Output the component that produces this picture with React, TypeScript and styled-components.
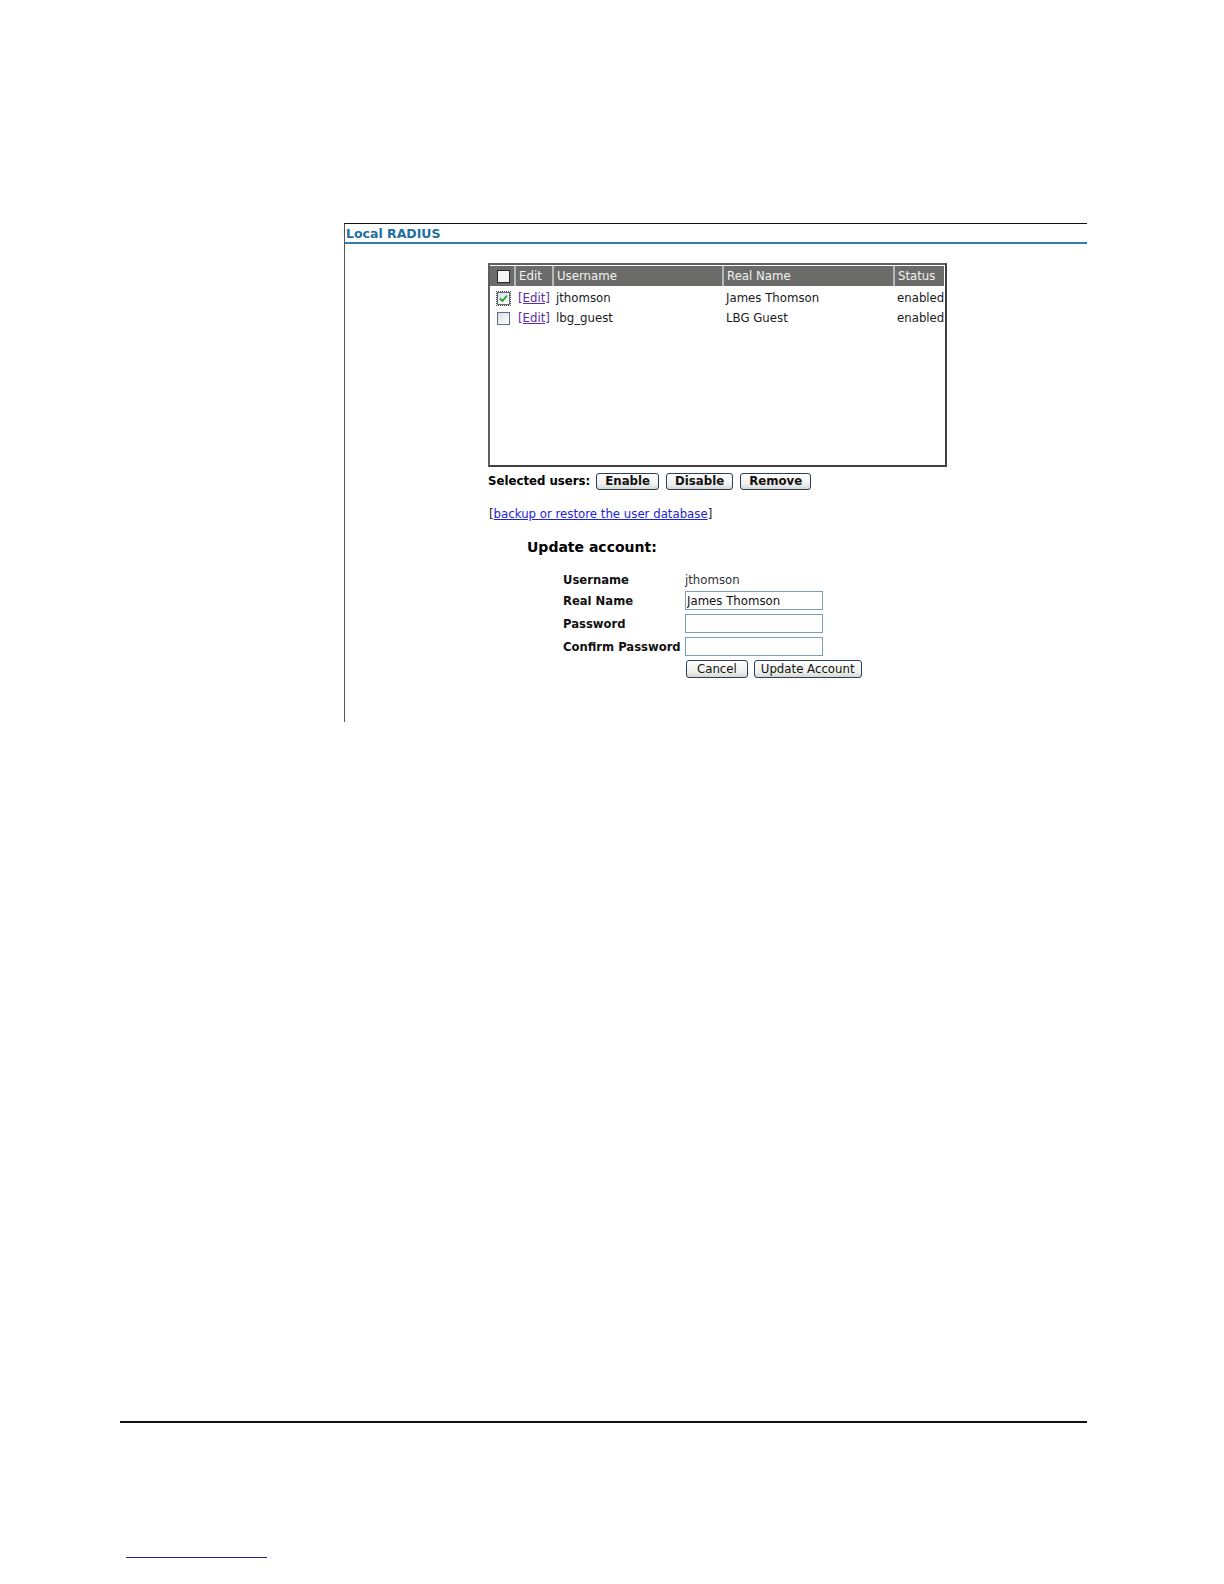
import React from 'react';
import styled, { createGlobalStyle } from 'styled-components';

const GlobalStyle = createGlobalStyle`
  html, body {
    margin: 0;
    padding: 0;
    background: #ffffff;
    overflow: hidden;
  }
  body {
    font-family: "DejaVu Sans", Verdana, sans-serif;
    color: #000;
  }
`;

const Page = styled.div`
  width: 1224px;
  height: 1584px;
  display: flex;
  flex-direction: column;
  padding-top: 223px;
  box-sizing: border-box;
  overflow: hidden;
`;

const Panel = styled.section`
  margin-left: 344px;
  width: 743px;
  height: 499px;
  flex: none;
  border-top: 1px solid #111;
  border-left: 1px solid #555;
  box-sizing: border-box;
  display: flex;
  flex-direction: column;
`;

const PanelTitle = styled.h2`
  margin: 0;
  padding: 1px 0 0 1px;
  height: 17px;
  font-size: 12.5px;
  line-height: 17px;
  font-weight: bold;
  color: #1f6f9f;
  border-bottom: 2px solid #2f7fb5;
`;

const PanelBody = styled.div`
  padding: 19px 0 0 143px;
  display: flex;
  flex-direction: column;
  font-size: 11.75px;
`;

const UserList = styled.div`
  width: 459px;
  height: 204px;
  box-sizing: border-box;
  border: 2px solid #5e5e5e;
  border-right-color: #404040;
  border-bottom-color: #404040;
  padding: 1px 1px 1px 0;
  display: flex;
  flex-direction: column;
`;

const cols = '24px 38px 170px 171px 1fr';

const HeaderRow = styled.div`
  display: grid;
  grid-template-columns: ${cols};
  height: 20px;
  margin-bottom: 2px;
  background: #6b6b6a;
`;

const HeaderCell = styled.div<{ $first?: boolean }>`
  display: flex;
  align-items: center;
  padding-left: 3px;
  color: #f2f2f2;
  font-size: 11.75px;
  border-left: ${({ $first }) => ($first ? 'none' : '2px solid #b8b8b8')};
  box-sizing: border-box;
`;

const Row = styled.div`
  display: grid;
  grid-template-columns: ${cols};
  height: 20px;
  align-items: center;
  color: #1a1a1a;
`;

const Cell = styled.div<{ $right?: boolean }>`
  padding-left: 4px;
  padding-right: 2px;
  text-align: ${({ $right }) => ($right ? 'right' : 'left')};
  white-space: nowrap;
`;

const Box = styled.span<{ $checked?: boolean; $dark?: boolean }>`
  display: inline-block;
  width: 11px;
  height: 11px;
  margin-left: ${({ $dark }) => ($dark ? '4px' : '3px')};
  border: 1px solid ${({ $dark }) => ($dark ? '#2a2a2a' : '#5e6e80')};
  background: ${({ $dark }) => ($dark ? '#f4f4f4' : 'linear-gradient(135deg, #d9dee4, #ffffff)')};
  outline: ${({ $checked }) => ($checked ? '1px dotted #444' : 'none')};
  outline-offset: 0;
  position: relative;
  vertical-align: middle;
`;

const Check = styled.svg`
  position: absolute;
  left: 1px;
  top: 1px;
`;

const EditLink = styled.a`
  color: #5a2ca8;
  text-decoration: underline;
  cursor: pointer;
`;

const ActionBar = styled.div`
  display: flex;
  align-items: center;
  gap: 7px;
  margin-top: 5px;
  height: 18px;
`;

const BoldLabel = styled.span`
  font-weight: bold;
  font-size: 11.75px;
  margin-right: -1px;
`;

const Button = styled.button<{ $bold?: boolean; $pad?: number }>`
  font-family: "DejaVu Sans", Verdana, sans-serif;
  font-size: 11.75px;
  font-weight: ${({ $bold }) => ($bold ? 'bold' : 'normal')};
  height: ${({ $bold }) => ($bold ? '17px' : '18px')};
  padding: 0 ${({ $pad }) => $pad ?? 8}px;
  border: 1px solid #2c3f5a;
  border-radius: 3px;
  color: #111;
  background: linear-gradient(#ffffff, #eeeeec 70%, #d6d6d2);
  line-height: 14px;
`;

const LinkLine = styled.div`
  margin-top: 17px;
  padding-left: 1px;
  font-size: 11.75px;
  color: #222;
`;

const BlueLink = styled.a`
  color: #1d24d6;
  text-decoration: underline;
  cursor: pointer;
`;

const FormTitle = styled.h3`
  margin: 18px 0 0 39px;
  font-size: 14px;
  font-weight: bold;
`;

const Form = styled.div`
  margin: 18px 0 0 75px;
  display: grid;
  grid-template-columns: 122px 190px;
  grid-template-rows: 14px;
  grid-auto-rows: auto;
  row-gap: 4px;
  align-items: center;
`;

const FormLabel = styled.div`
  font-weight: bold;
  font-size: 11.6px;
  color: #111;
`;

const FormValue = styled.div`
  font-size: 11.75px;
  color: #333;
`;

const Input = styled.input`
  width: 138px;
  height: 19px;
  box-sizing: border-box;
  border: 1px solid #7f9db9;
  padding: 0 1px;
  font-family: "DejaVu Sans", Verdana, sans-serif;
  font-size: 11.75px;
  color: #111;
`;

const FormButtons = styled.div`
  grid-column: 2;
  display: flex;
  gap: 6px;
  padding-left: 1px;
`;

const FooterRule = styled.div`
  flex: none;
  margin: 699px 0 0 120px;
  width: 967px;
  height: 2px;
  background: #111;
`;

const FootLink = styled.div`
  flex: none;
  margin: 134px 0 0 126px;
  width: 141px;
  height: 1px;
  background: #23238a;
`;

const users = [
  { username: 'jthomson', realName: 'James Thomson', status: 'enabled', checked: true },
  { username: 'lbg_guest', realName: 'LBG Guest', status: 'enabled', checked: false },
];

export default function App() {
  return (
    <>
      <GlobalStyle />
      <Page>
        <Panel>
          <PanelTitle>Local RADIUS</PanelTitle>
          <PanelBody>
            <UserList>
              <HeaderRow>
                <HeaderCell $first>
                  <Box $dark />
                </HeaderCell>
                <HeaderCell>Edit</HeaderCell>
                <HeaderCell>Username</HeaderCell>
                <HeaderCell>Real Name</HeaderCell>
                <HeaderCell>Status</HeaderCell>
              </HeaderRow>
              {users.map((u) => (
                <Row key={u.username}>
                  <Cell>
                    <Box $checked={u.checked}>
                      {u.checked && (
                        <Check width="9" height="9" viewBox="0 0 9 9">
                          <path d="M1 4.5 L3.5 7 L8 1.5" fill="none" stroke="#21a121" strokeWidth="1.8" />
                        </Check>
                      )}
                    </Box>
                  </Cell>
                  <Cell>
                    <EditLink>[Edit]</EditLink>
                  </Cell>
                  <Cell>{u.username}</Cell>
                  <Cell>{u.realName}</Cell>
                  <Cell $right>{u.status}</Cell>
                </Row>
              ))}
            </UserList>
            <ActionBar>
              <BoldLabel>Selected users:</BoldLabel>
              <Button $bold>Enable</Button>
              <Button $bold>Disable</Button>
              <Button $bold>Remove</Button>
            </ActionBar>
            <LinkLine>
              [<BlueLink>backup or restore the user database</BlueLink>]
            </LinkLine>
            <FormTitle>Update account:</FormTitle>
            <Form>
              <FormLabel>Username</FormLabel>
              <FormValue>jthomson</FormValue>
              <FormLabel>Real Name</FormLabel>
              <Input defaultValue="James Thomson" />
              <FormLabel>Password</FormLabel>
              <Input type="password" />
              <FormLabel>Confirm Password</FormLabel>
              <Input type="password" />
              <FormButtons>
                <Button $pad={10}>Cancel</Button>
                <Button $pad={6}>Update Account</Button>
              </FormButtons>
            </Form>
          </PanelBody>
        </Panel>
        <FooterRule />
        <FootLink />
      </Page>
    </>
  );
}
